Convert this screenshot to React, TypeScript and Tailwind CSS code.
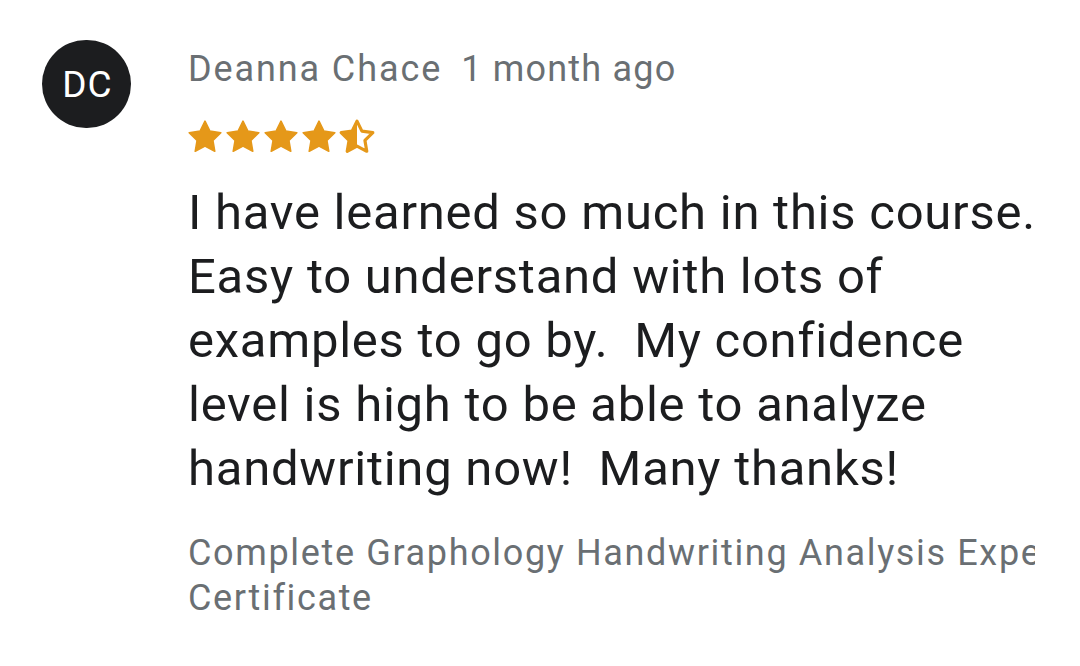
import React from 'react';

const STAR = "M12 2l3.09 6.26L22 9.27l-5 4.87 1.18 6.88L12 17.77l-6.18 3.25L7 14.14 2 9.27l6.91-1.01L12 2z";

const Star: React.FC<{ half?: boolean }> = ({ half }) => (
  <svg viewBox="0 0 24 24" className="w-[38px] h-[38px]">
    {half ? (
      <>
        <defs>
          <clipPath id="half-left">
            <rect x="0" y="0" width="12" height="24" />
          </clipPath>
        </defs>
        <path d={STAR} fill="#e59819" clipPath="url(#half-left)" />
        <path d={STAR} fill="none" stroke="#e59819" strokeWidth="2" strokeLinejoin="round" />
      </>
    ) : (
      <path d={STAR} fill="#e59819" stroke="#e59819" strokeWidth="1" strokeLinejoin="round" />
    )}
  </svg>
);

export default function App() {
  return (
    <div className="w-[1080px] h-[666px] bg-white overflow-hidden font-['Roboto',sans-serif]">
      <div className="flex pl-[42px] pt-[40px]">
        {/* avatar */}
        <div className="w-[89px] h-[88px] shrink-0 rounded-full bg-[#1c1d1f] flex items-center justify-center text-white text-[37px] tracking-[1px] leading-none pl-[2px]">
          DC
        </div>

        <div className="ml-[57px] w-[848px] mt-[7px]">
          <div className="flex items-baseline text-[36px] leading-[44px] text-[#6a6f73]">
            <span className="tracking-[1.9px]">Deanna Chace</span>
            <span className="ml-[19px] tracking-[1.2px]">1 month ago</span>
          </div>

          <div className="flex mt-[27px] -ml-[2px]">
            <Star />
            <Star />
            <Star />
            <Star />
            <Star half />
          </div>

          <p className="mt-[25px] text-[49px] leading-[64px] tracking-[0.75px] text-[#1c1d1f]">
            I have learned so much in this course.
            <br />
            Easy to understand with lots of
            <br />
            examples to go by.&nbsp; My confidence
            <br />
            level is high to be able to analyze
            <br />
            handwriting now!&nbsp; Many thanks!
          </p>

          <div className="mt-[30px] w-[847px] text-[36px] leading-[45px] tracking-[1.65px] text-[#6a6f73] overflow-hidden">
            <div className="whitespace-nowrap">Complete Graphology Handwriting Analysis Expert</div>
            <div>Certificate</div>
          </div>
        </div>
      </div>
    </div>
  );
}
